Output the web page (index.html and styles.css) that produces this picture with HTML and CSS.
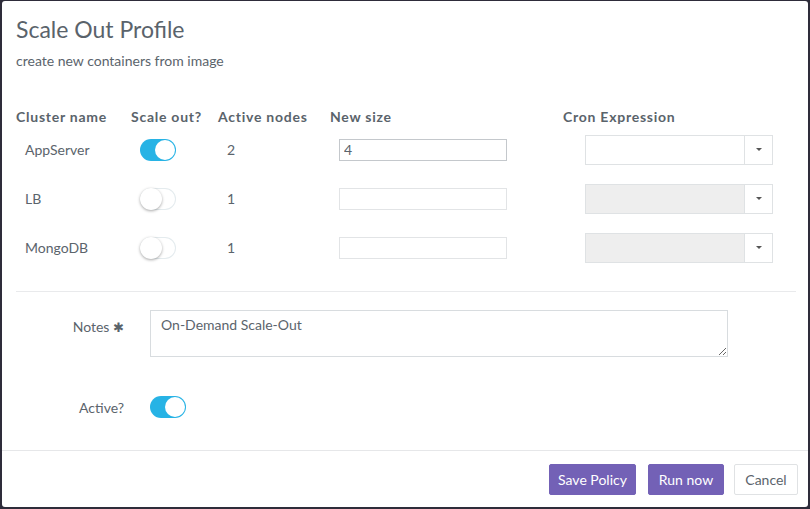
FILE: index.html
```html
<!DOCTYPE html>
<html lang="en">
<head>
    <meta charset="UTF-8">
    <title>Scale Out Profile</title>
    <link rel="stylesheet" href="styles.css">
</head>
<body>
    <div class="modal">
        <div class="modal-header">
            <h1>Scale Out Profile</h1>
            <p>create new containers from image</p>
        </div>
        <div class="modal-body">
            <div class="grid">
                <div class="th c-name">Cluster name</div>
                <div class="th">Scale out?</div>
                <div class="th">Active nodes</div>
                <div class="th">New size</div>
                <div class="th"></div>
                <div class="th">Cron Expression</div>

                <div class="td c-name">AppServer</div>
                <div class="td"><span class="switch on"></span></div>
                <div class="td">2</div>
                <div class="td"><input class="size active" type="text" value="4"></div>
                <div class="td"></div>
                <div class="td cron"><div class="combo"><span class="combo-field"></span><span class="combo-btn"><span class="caret"></span></span></div></div>

                <div class="td c-name">LB</div>
                <div class="td"><span class="switch"></span></div>
                <div class="td">1</div>
                <div class="td"><input class="size" type="text"></div>
                <div class="td"></div>
                <div class="td cron"><div class="combo disabled"><span class="combo-field"></span><span class="combo-btn"><span class="caret"></span></span></div></div>

                <div class="td c-name">MongoDB</div>
                <div class="td"><span class="switch"></span></div>
                <div class="td">1</div>
                <div class="td"><input class="size" type="text"></div>
                <div class="td"></div>
                <div class="td cron"><div class="combo disabled"><span class="combo-field"></span><span class="combo-btn"><span class="caret"></span></span></div></div>
            </div>

            <hr>

            <div class="form-row notes-row">
                <label>Notes <span class="req">&#10033;</span></label>
                <textarea>On-Demand Scale-Out</textarea>
            </div>
            <div class="form-row active-row">
                <label>Active?</label>
                <span class="switch on"></span>
            </div>
        </div>
        <div class="modal-footer">
            <button class="btn primary btn-save">Save Policy</button>
            <button class="btn primary btn-run">Run now</button>
            <button class="btn btn-cancel">Cancel</button>
        </div>
    </div>
</body>
</html>
```

FILE: styles.css
```css
html, body {
    height: 100%;
}

body {
    margin: 0;
    background-color: #2e2c3a;
    font-family: Lato, "Open Sans", sans-serif;
    color: #5b646c;
    font-size: 14px;
    overflow: hidden;
}

.modal {
    margin: 1px 2px 0 2px;
    height: 506px;
    background-color: #fff;
    border-radius: 3px;
    display: flex;
    flex-direction: column;
}

.modal-header {
    padding: 14px 14px 0 14px;
    height: 76px;
}

.modal-header h1 {
    margin: 0;
    font-size: 23px;
    font-weight: normal;
    line-height: 28px;
    color: #5a636b;
}

.modal-header p {
    margin: 10px 0 0 0;
    font-size: 14px;
    line-height: 16px;
}

.modal-body {
    padding: 17px 12px 0 14px;
    flex: 1;
}

.grid {
    display: grid;
    grid-template-columns: 115px 87px 112px 170px 63px 210px;
    grid-template-rows: 17px repeat(3, 49px);
    align-items: center;
}

.th {
    font-weight: bold;
    font-size: 14px;
    letter-spacing: 0.75px;
    color: #5a636b;
    white-space: nowrap;
}

.td {
    font-size: 14px;
    padding-left: 9px;
    height: 49px;
    display: flex;
    align-items: center;
}

.td.cron {
    padding-left: 22px;
}

.switch {
    display: inline-block;
    width: 36px;
    height: 22px;
    border-radius: 11px;
    background-color: #fff;
    box-shadow: inset 0 0 0 1px #e4ebee;
    position: relative;
    flex-shrink: 0;
}

.switch::after {
    content: "";
    position: absolute;
    left: 0;
    top: 0;
    width: 22px;
    height: 22px;
    border-radius: 50%;
    background-color: #fff;
    box-shadow: 0 1px 3px rgba(0, 0, 0, 0.35);
}

.switch.on {
    background-color: #27b3e5;
    box-shadow: none;
}

.switch.on::after {
    left: 15px;
    width: 20px;
    height: 20px;
    top: 1px;
    box-shadow: none;
}

.size {
    box-sizing: border-box;
    width: 168px;
    height: 22px;
    border: 1px solid #e2e4e6;
    padding: 0 4px;
    font-family: Lato, sans-serif;
    font-size: 14px;
    color: #5b646c;
    margin: 0;
}

.size.active {
    border-color: #c4c8cc;
}

.combo {
    display: flex;
    flex-shrink: 0;
    width: 188px;
    height: 30px;
    box-sizing: border-box;
    border: 1px solid #dfe2e4;
}

.combo-field {
    flex: 1;
    border-right: 1px solid #dfe2e4;
}

.combo.disabled .combo-field {
    background-color: #eeeeee;
}

.combo-btn {
    width: 27px;
    display: flex;
    align-items: center;
    justify-content: center;
}

.caret {
    width: 0;
    height: 0;
    border-left: 3px solid transparent;
    border-right: 3px solid transparent;
    border-top: 3px solid #555;
}

hr {
    border: 0;
    border-top: 1px solid #e9eaec;
    margin: 19px 0 0 0;
}

.form-row {
    display: flex;
    align-items: flex-start;
}

.form-row label {
    width: 108px;
    text-align: right;
    font-size: 14px;
    margin-right: 26px;
}

.notes-row {
    margin-top: 18px;
}

.notes-row label {
    padding-top: 8px;
}

.req {
    font-size: 13px;
    color: #5a636b;
}

textarea {
    width: 578px;
    height: 47px;
    box-sizing: border-box;
    border: 1px solid #d8dcdf;
    padding: 5px 10px;
    font-family: Lato, sans-serif;
    font-size: 14px;
    color: #5b646c;
    resize: vertical;
    margin: 0;
}

.active-row {
    margin-top: 39px;
    align-items: center;
}

.modal-footer {
    border-top: 1px solid #e6e7e9;
    height: 56px;
    display: flex;
    justify-content: flex-end;
    align-items: center;
    padding: 0 10px 0 0;
}

.btn {
    height: 31px;
    padding: 0 11px;
    font-family: Lato, sans-serif;
    font-size: 14px;
    border: 1px solid #e0e2e4;
    background-color: #fff;
    color: #5b646c;
    border-radius: 2px;
}

.btn.primary {
    background-color: #7361b6;
    border-color: #7361b6;
    color: #fff;
}

.btn-save {
    width: 87px;
    padding: 0;
    margin-right: 12px;
}

.btn-run {
    width: 76px;
    padding: 0;
    margin-right: 10px;
}

.btn-cancel {
    width: 64px;
    padding: 0;
}
```
